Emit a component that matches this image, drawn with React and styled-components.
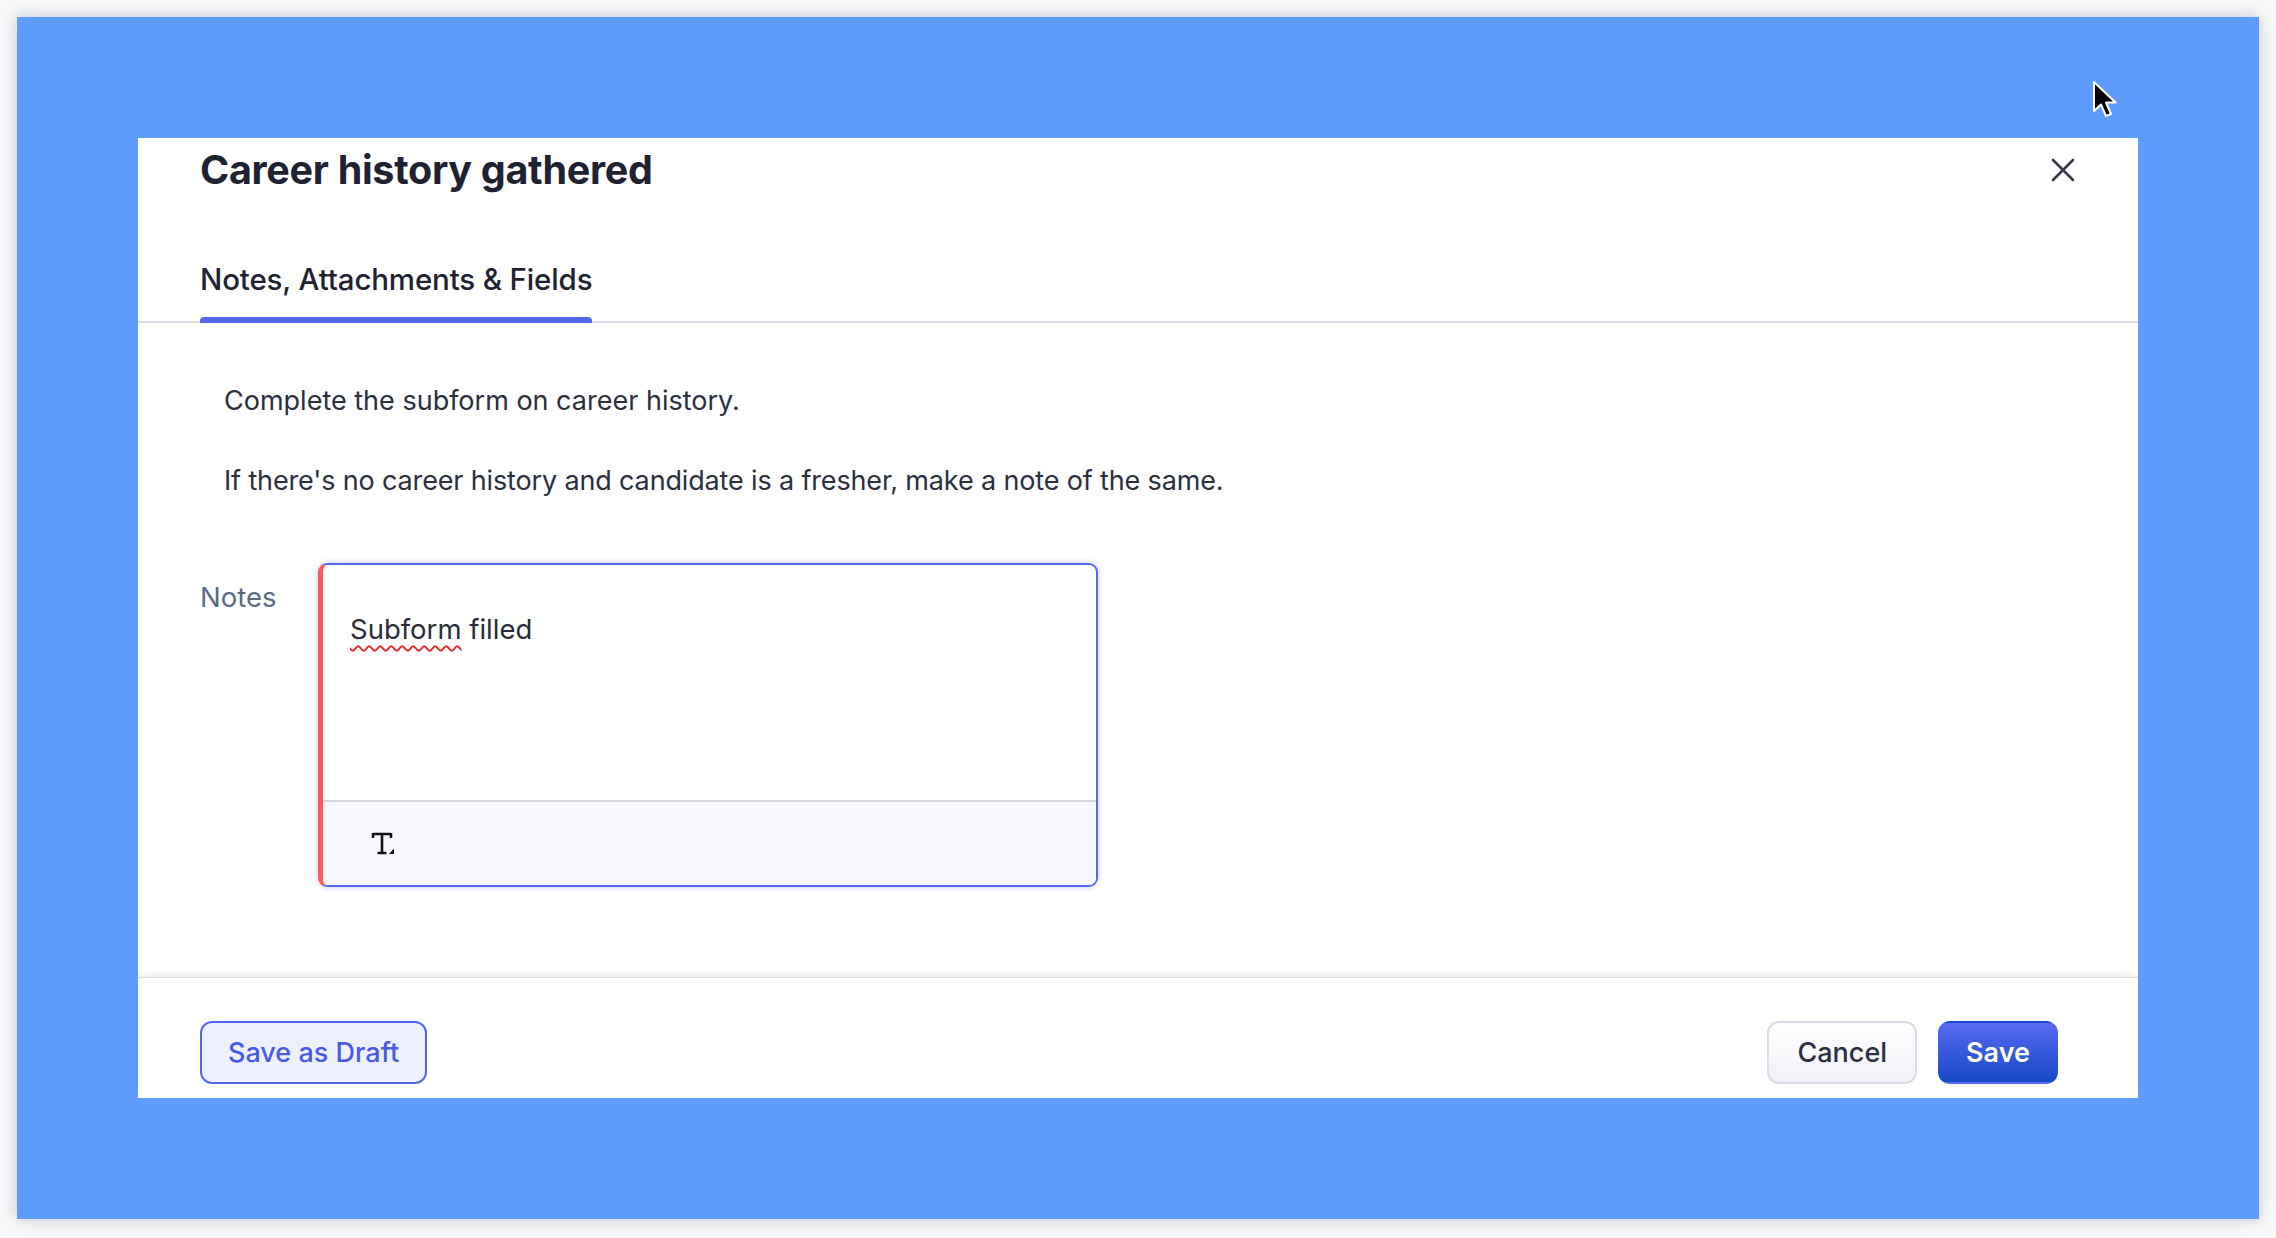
import React from 'react';
import styled, { createGlobalStyle } from 'styled-components';

const GlobalStyle = createGlobalStyle`
	html, body {
		margin: 0;
		padding: 0;
		background: #f6f7f8;
	}
	body {
		font-family: Inter, "Noto Sans", sans-serif;
		-webkit-font-smoothing: antialiased;
	}
`;

function CloseIcon() {
	return (
		<svg width="24" height="24" viewBox="0 0 24 24" fill="none" stroke="#353b4a" strokeWidth="2.6" strokeLinecap="round">
			<path d="M2 2 L22 22 M22 2 L2 22" />
		</svg>
	);
}

function TextFormatIcon() {
	return (
		<svg width="28" height="28" viewBox="0 0 28 28" fill="none">
			<path d="M3 4 H21 M3 3 V8 M21 3 V8 M12 4 V23 M7.5 23 H16.5" stroke="#111" strokeWidth="2.6" />
			<path d="M19 24 L24 18.5 V24 Z" fill="#111" />
		</svg>
	);
}

function Pointer() {
	return (
		<svg width="26" height="40" viewBox="0 0 26 40">
			<path d="M2 2 L2 31 L9 24.5 L14 36 L19 34 L14 22.5 L23.5 22.5 Z" fill="#000" stroke="#fff" strokeWidth="2" strokeLinejoin="round" />
		</svg>
	);
}

function App() {
	return (
		<>
			<GlobalStyle />
			<Page>
				<Backdrop>
					<Modal>
						<Header>
							<Title>Career history gathered</Title>
							<CloseButton aria-label="Close"><CloseIcon /></CloseButton>
						</Header>
						<TabBar>
							<Tab>
								<TabLabel>Notes, Attachments &amp; Fields</TabLabel>
								<TabIndicator />
							</Tab>
						</TabBar>
						<Body>
							<Description>
								<Para>Complete the subform on career history.</Para>
								<Para $spaced>If there's no career history and candidate is a fresher, make a note of the same.</Para>
							</Description>
							<NotesRow>
								<NotesLabel>Notes</NotesLabel>
								<Editor>
									<EditorText>
										<Misspelt>Subform</Misspelt> filled
									</EditorText>
									<Toolbar>
										<TextFormatIcon />
									</Toolbar>
								</Editor>
							</NotesRow>
						</Body>
						<Footer>
							<Button $variant="draft">Save as Draft</Button>
							<ButtonGroup>
								<Button $variant="cancel">Cancel</Button>
								<Button $variant="primary">Save</Button>
							</ButtonGroup>
						</Footer>
					</Modal>
					<Cursor><Pointer /></Cursor>
				</Backdrop>
			</Page>
		</>
	);
}

const Page = styled.div`
	width: 2276px;
	height: 1238px;
	box-sizing: border-box;
	padding: 17px 17px 19px;
`
const Backdrop = styled.div`
	position: relative;
	display: flex;
	height: 100%;
	box-sizing: border-box;
	padding: 121px;
	background: #5e9dfd;
	box-shadow: 0 0 14px rgba(70, 90, 110, 0.28);
`
const Modal = styled.div`
	flex: 1;
	display: flex;
	flex-direction: column;
	background: #fff;
`
const Header = styled.div`
	display: flex;
	align-items: center;
	justify-content: space-between;
	padding: 8px 63px 0 62px;
`
const Title = styled.h1`
	margin: 0;
	font-size: 39.5px;
	line-height: 48px;
	font-weight: 700;
	letter-spacing: -0.3px;
	color: #1f2230;
`
const CloseButton = styled.button`
	display: flex;
	padding: 0;
	border: none;
	background: none;
	cursor: pointer;
`
const TabBar = styled.div`
	display: flex;
	margin-top: 65px;
	padding: 0 62px;
	border-bottom: 2px solid #dedcea;
`
const Tab = styled.div`
	display: flex;
	flex-direction: column;
`
const TabLabel = styled.span`
	font-size: 29.5px;
	line-height: 40px;
	font-weight: 500;
	letter-spacing: -0.15px;
	color: #1f2230;
`
const TabIndicator = styled.div`
	height: 6px;
	margin-top: 18px;
	margin-bottom: -2px;
	border-radius: 4px 4px 0 0;
	background: #5466ee;
`
const Body = styled.div`
	flex: 1;
	padding: 60px 62px 0;
`
const Description = styled.div`
	padding-left: 24px;
`
const Para = styled.p`
	margin: ${p => (p.$spaced ? '44px 0 0' : '0')};
	font-size: 27px;
	line-height: 36px;
	letter-spacing: ${p => (p.$spaced ? '-0.15px' : '0')};
	color: #2b2f3e;
`
const NotesRow = styled.div`
	display: flex;
	margin-top: 64px;
`
const NotesLabel = styled.div`
	width: 118px;
	padding-top: 20px;
	font-size: 27.5px;
	line-height: 28px;
	color: #5b6a85;
`
const Editor = styled.div`
	display: flex;
	flex-direction: column;
	width: 780px;
	height: 324px;
	box-sizing: border-box;
	overflow: hidden;
	border: 2px solid #5668f0;
	border-left: 5px solid #ff5a5f;
	border-radius: 9px;
	box-shadow: 0 0 6px rgba(86, 104, 240, 0.35);
`
const EditorText = styled.div`
	flex: 1;
	padding: 46px 0 0 27px;
	font-size: 27.5px;
	line-height: 36px;
	color: #2a2d36;
`
const Misspelt = styled.span`
	text-decoration: underline wavy #e8262b;
	text-decoration-thickness: 1.5px;
	text-underline-offset: 6px;
`
const Toolbar = styled.div`
	display: flex;
	align-items: center;
	height: 85px;
	box-sizing: border-box;
	padding-left: 47px;
	border-top: 2px solid #d6d6e0;
	background: #f8f9fe;
`
const Footer = styled.div`
	display: flex;
	align-items: center;
	justify-content: space-between;
	padding: 43px 80px 14px 62px;
	border-top: 1px solid #dcdce3;
	box-shadow: 0 -5px 8px -4px rgba(0, 0, 0, 0.13);
`
const ButtonGroup = styled.div`
	display: flex;
	gap: 21px;
`
const variants = {
	draft: `
		padding: 0 26px;
		color: #4a5ae8;
		background: #eff0fd;
		border: 2px solid #5466ee;
		font-weight: 500;
	`,
	cancel: `
		padding: 0 28px;
		color: #2b2f3e;
		background: linear-gradient(180deg, #fefeff 0%, #f1f1f6 100%);
		border: 2px solid #dadbe9;
		font-weight: 500;
	`,
	primary: `
		padding: 0 26px;
		color: #fff;
		background: linear-gradient(180deg, #5869f3 0%, #1649c6 100%);
		border: 2px solid transparent;
		font-weight: 600;
	`,
};
const Button = styled.button`
	height: 63px;
	box-sizing: border-box;
	border-radius: 12px;
	font-family: Inter, "Noto Sans", sans-serif;
	font-size: 27px;
	cursor: pointer;
	${p => variants[p.$variant]}
`
const Cursor = styled.div`
	position: absolute;
	left: 2075px;
	top: 63px;
	display: flex;
`

export default App;
